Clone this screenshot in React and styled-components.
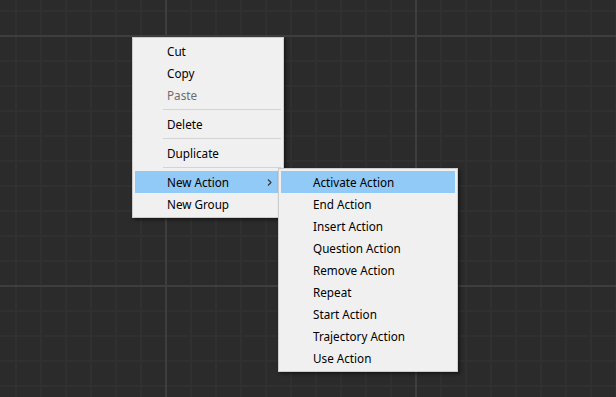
import React from "react";
import styled, { createGlobalStyle } from "styled-components";

const GlobalStyle = createGlobalStyle`
  body {
    margin: 0;
    background: #2b2b2b;
  }
`;

const Canvas = styled.div`
  position: relative;
  width: 616px;
  height: 397px;
  overflow: hidden;
  background-color: #2b2b2b;
  background-image:
    linear-gradient(to right, #3e3e3e 2px, transparent 2px),
    linear-gradient(to bottom, #3e3e3e 2px, transparent 2px),
    linear-gradient(to right, #303030 2px, transparent 2px),
    linear-gradient(to bottom, #303030 2px, transparent 2px);
  background-size: 250px 250px, 250px 250px, 25px 25px, 25px 25px;
  background-position: 165px 0, 0 35px, 15px 0, 0 10px;
  font-family: "Segoe UI", "Noto Sans", "Open Sans", sans-serif;
  font-size: 11.7px;
`;

const Menu = styled.div`
  position: absolute;
  left: ${(p) => p.$left}px;
  top: ${(p) => p.$top}px;
  width: ${(p) => p.$width}px;
  box-sizing: border-box;
  padding: 2px;
  background: #f0f0f0;
  border: 1px solid #cccccc;
  box-shadow: 2px 2px 3px rgba(0, 0, 0, 0.45);
`;

const Item = styled.div`
  position: relative;
  display: flex;
  align-items: center;
  height: 22px;
  box-sizing: border-box;
  padding-left: 32px;
  padding-bottom: 1px;
  color: ${(p) => (p.$disabled ? "#6d6d6d" : "#000")};
  background: ${(p) => (p.$active ? "#91c9f7" : "transparent")};
  white-space: nowrap;
`;

const Separator = styled.div`
  height: 7px;
  display: flex;
  align-items: center;
  margin-left: 28px;

  &::after {
    content: "";
    flex: 1;
    height: 1px;
    background: #d4d4d4;
  }
`;

const Arrow = styled.svg`
  position: absolute;
  right: 9px;
  top: 8px;
`;

const SubMenu = styled(Menu)`
  left: 143px;
  top: -3px;
  z-index: 2;
  padding-bottom: 2px;
`;

const actions = [
  "Activate Action",
  "End Action",
  "Insert Action",
  "Question Action",
  "Remove Action",
  "Repeat",
  "Start Action",
  "Trajectory Action",
  "Use Action",
];

export default function App() {
  return (
    <>
      <GlobalStyle />
      <Canvas>
        <Menu $left={132} $top={37} $width={152}>
          <Item>Cut</Item>
          <Item>Copy</Item>
          <Item $disabled>Paste</Item>
          <Separator />
          <Item>Delete</Item>
          <Separator />
          <Item>Duplicate</Item>
          <Separator />
          <Item $active>
            New Action
            <Arrow width="5" height="7" viewBox="0 0 5 7">
              <path d="M1 0.5 L4 3.5 L1 6.5" fill="none" stroke="#333" strokeWidth="1.1" />
            </Arrow>
            <SubMenu $width={180}>
              {actions.map((a, i) => (
                <Item key={a} $active={i === 0}>
                  {a}
                </Item>
              ))}
            </SubMenu>
          </Item>
          <Item>New Group</Item>
        </Menu>
      </Canvas>
    </>
  );
}
